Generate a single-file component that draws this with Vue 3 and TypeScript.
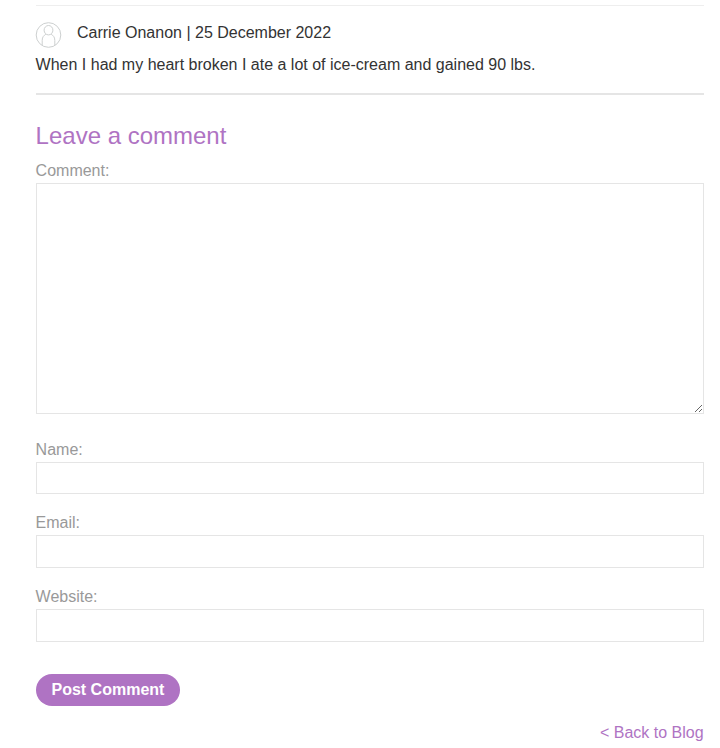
<script setup lang="ts">
import { ref } from 'vue'

interface Field { id: string; label: string; value: string }
const comment = ref('')
const fields = ref<Field[]>([
  { id: 'name', label: 'Name:', value: '' },
  { id: 'email', label: 'Email:', value: '' },
  { id: 'website', label: 'Website:', value: '' },
])
</script>

<template>
  <main class="page">
    <article class="entry">
      <header class="byline">
        <svg class="avatar" viewBox="0 0 26 26" aria-hidden="true">
          <circle cx="12.5" cy="13" r="12.3" />
          <ellipse cx="12.5" cy="8.2" rx="4.4" ry="4.7" />
          <path d="M6.2 23.5V18.4C6.2 14.8 8 13.4 9.8 12.3M15.2 12.3C17 13.4 18.8 14.8 18.8 18.4V23.5" />
        </svg>
        <span>Carrie Onanon | 25 December 2022</span>
      </header>
      <p class="body">When I had my heart broken I ate a lot of ice-cream and gained 90 lbs.</p>
    </article>
    <form @submit.prevent>
      <h2>Leave a comment</h2>
      <label for="comment">Comment:</label>
      <textarea id="comment" v-model="comment"></textarea>
      <div v-for="f in fields" :key="f.id" class="field" :class="f.id">
        <label :for="f.id">{{ f.label }}</label>
        <input :id="f.id" v-model="f.value" type="text" />
      </div>
      <button type="submit">Post Comment</button>
    </form>
    <nav class="back"><a href="#">&lt; Back to Blog</a></nav>
  </main>
</template>

<style>
body { margin: 0; background: #fff; }
</style>

<style scoped>
.page { box-sizing: border-box; height: 748px; overflow: hidden; padding: 5px 16.4px 0 35.6px; font: 16px/24px "Liberation Sans", Arial, sans-serif; color: #333; }
.entry { box-sizing: border-box; height: 90px; border-top: 1px solid #eee; border-bottom: 2px solid #e5e5e5; padding-top: 16px; }
.byline { display: flex; gap: 15.4px; height: 26px; line-height: 22px; }
.avatar { width: 26px; height: 26px; overflow: visible; fill: none; stroke: #cdd0d0; stroke-width: 1; }
.body { margin: 4px 0 0; line-height: 25px; }
h2 { margin: 25px 0 0; font-size: 24px; line-height: 32px; font-weight: 400; color: #af73c3; }
label { display: block; height: 25px; line-height: 25px; color: #999; }
h2 + label { height: 31px; line-height: 37px; }
textarea, input { display: block; box-sizing: border-box; width: 100%; margin: 0; border: 1px solid #e5e5e5; border-radius: 0; padding: 5px; background: #fff; font: inherit; outline: none; }
textarea { height: 231px; resize: vertical; }
.field { margin-top: 16px; }
.field.name { margin-top: 23px; }
input { height: 33px; }
.name input { height: 32px; }
button { display: block; width: 144px; height: 32px; margin-top: 32px; padding: 0 0 0 .7px; border: 0; border-radius: 16px; background: #af73c3; color: #fff; font: bold 16px/32px "Liberation Sans", Arial, sans-serif; }
.back { margin-top: 15px; text-align: right; }
.back a { color: #af73c3; text-decoration: none; }
</style>
